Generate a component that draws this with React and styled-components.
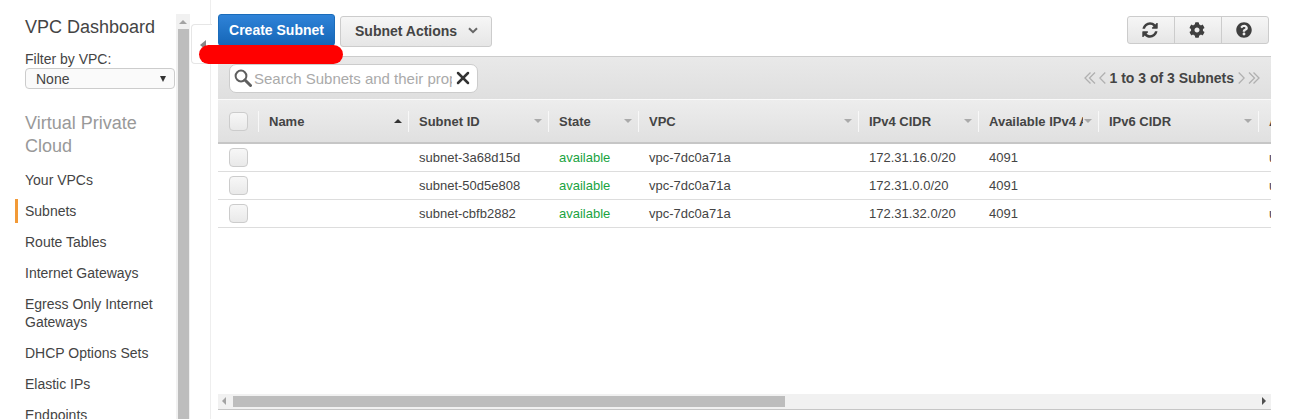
import React from "react";
import styled, { createGlobalStyle } from "styled-components";
import { FaCog, FaQuestionCircle } from "react-icons/fa";
import { X } from "lucide-react";

const Global = createGlobalStyle`
  html, body { margin: 0; padding: 0; background: #fff; overflow: hidden; }
  * { box-sizing: border-box; }
  body { font-family: "Liberation Sans", Arial, sans-serif; color: #444; }
`;

const Page = styled.div`
  display: flex;
  width: 1300px;
  height: 419px;
  overflow: hidden;
  position: relative;
`;

const Sidebar = styled.aside`
  flex: 0 0 176px;
  padding: 17px 0 0 25px;
  height: 419px;
  overflow: hidden;
`;

const SideTitle = styled.div`
  font-size: 18px;
  line-height: 21px;
  color: #444;
`;

const FilterLabel = styled.div`
  font-size: 14px;
  line-height: 16px;
  margin-top: 13px;
  color: #444;
`;

const FilterSelect = styled.div`
  display: flex;
  align-items: center;
  justify-content: space-between;
  width: 150px;
  height: 21px;
  margin-top: 1px;
  padding: 0 8px 0 10px;
  border: 1px solid #ccc;
  border-radius: 4px;
  background: #fafafa;
  font-size: 14px;
  color: #444;
`;

const SelectArrow = styled.span`
  width: 0;
  height: 0;
  border-left: 3.5px solid transparent;
  border-right: 3.5px solid transparent;
  border-top: 6px solid #333;
`;

const SectionTitle = styled.div`
  font-size: 18px;
  line-height: 23px;
  color: #999;
  margin: 23px 0 10px;
`;

const NavItem = styled.div`
  font-size: 14px;
  line-height: 18px;
  color: #444;
  margin: 0 0 7px -10px;
  padding: 3px 0 3px ${(p) => (p.$active ? "7px" : "10px")};
  width: 150px;
  border-left: ${(p) => (p.$active ? "3px solid #f29a37" : "none")};
`;

const VScroll = styled.div`
  flex: 0 0 14px;
  margin-top: 14px;
  height: 405px;
  background: #f1f1f1;
  display: flex;
  flex-direction: column;
  align-items: center;
`;

const VArrow = styled.div`
  flex: 0 0 4px;
  width: 0;
  height: 0;
  margin-top: 6px;
  border-left: 4px solid transparent;
  border-right: 4px solid transparent;
  border-bottom: 4px solid #a3a3a3;
`;

const VThumb = styled.div`
  width: 11px;
  flex: 1;
  margin-top: 5px;
  background: #bdbdbd;
`;

const Gutter = styled.div`
  flex: 0 0 21px;
  height: 419px;
  border-right: 1px solid #eee;
  position: relative;
`;

const CollapseTab = styled.div`
  position: absolute;
  left: 1px;
  top: 24px;
  width: 21px;
  height: 40px;
  background: #fff;
  border: 1px solid #e6e6e6;
  border-right: none;
  border-radius: 4px 0 0 4px;
  display: flex;
  padding: 15px 0 0 8px;
`;

const CollapseArrow = styled.span`
  width: 0;
  height: 0;
  border-top: 5px solid transparent;
  border-bottom: 5px solid transparent;
  border-right: 6px solid #888;
`;

const Main = styled.main`
  flex: 0 0 1053px;
  margin-left: 7px;
  height: 419px;
  display: flex;
  flex-direction: column;
  position: relative;
`;

const Toolbar = styled.div`
  flex: 0 0 56px;
  display: flex;
  align-items: flex-start;
  padding-top: 14px;
`;

const PrimaryButton = styled.button`
  width: 117px;
  height: 32px;
  padding: 0;
  border: 1px solid #1a6cba;
  border-radius: 3px;
  background: linear-gradient(#2f83d8, #1566b7);
  color: #fff;
  font: bold 14px "Liberation Sans", Arial, sans-serif;
`;

const ActionsButton = styled.button`
  display: flex;
  align-items: center;
  gap: 11px;
  width: 152px;
  height: 31px;
  margin: 2px 0 0 5px;
  padding: 0 0 2px 14px;
  border: 1px solid #ccc;
  border-radius: 3px;
  background: linear-gradient(#f6f6f6, #e6e6e6);
  color: #444;
  font: bold 14px "Liberation Sans", Arial, sans-serif;
`;

const IconGroup = styled.div`
  display: flex;
  margin: 2px 2px 0 auto;
  width: 142px;
  height: 28px;
  border: 1px solid #ccc;
  border-radius: 3px;
  background: linear-gradient(#f6f6f6, #e6e6e6);
`;

const IconButton = styled.div`
  flex: 1;
  display: flex;
  align-items: center;
  justify-content: center;
  padding-right: 2px;
  color: #3f3f3f;
  font-size: 16px;
  & + & { border-left: 1px solid #ccc; }
`;

const FilterBar = styled.div`
  flex: 0 0 44px;
  display: flex;
  align-items: center;
  justify-content: space-between;
  padding: 0 11px;
  border-top: 1px solid #ccc;
  border-bottom: 1px solid #fafafa;
  background: linear-gradient(#e9e9e9, #dfdfdf);
`;

const SearchBox = styled.div`
  display: flex;
  align-items: center;
  width: 249px;
  height: 29px;
  padding: 0 4px;
  border: 1px solid #ccc;
  border-radius: 7px;
  background: #fff;

  svg { flex: none; }
`;

const SearchText = styled.span`
  flex: none;
  width: 198px;
  margin: 0 1px 0 2px;
  overflow: hidden;
  white-space: nowrap;
  font-size: 15px;
  color: #aaa;
`;

const Pager = styled.div`
  display: flex;
  align-items: center;
  font-size: 14px;
  font-weight: bold;
  color: #444;
`;

const PagerText = styled.span`
  margin: 0 1px;
`;

const ChevronSvg = styled.svg`
  flex: none;
  margin: ${(p) => (p.$flip ? "0 0 0 3px" : "0 3px 0 0")};
  transform: ${(p) => (p.$flip ? "scaleX(-1)" : "none")};
`;

const HeaderRow = styled.div`
  flex: 0 0 44px;
  display: grid;
  grid-template-columns: ${(p) => p.$cols};
  align-items: center;
  background: linear-gradient(#ededed, #e0e0e0);
  border-bottom: 2px solid #c6c6c6;
  overflow: hidden;
`;

const HeaderCell = styled.div`
  display: flex;
  align-items: center;
  height: 21px;
  padding: 0 6px 0 10px;
  border-left: 1px solid #f8f8f8;
  font-size: 13px;
  font-weight: bold;
  color: #444;
  white-space: nowrap;
  overflow: hidden;
`;

const HeaderLabel = styled.span`
  flex: 1;
  min-width: 0;
  overflow: hidden;
`;

const SortArrow = styled.span`
  flex: none;
  margin-left: 1px;
  width: 0;
  height: 0;
  border-left: 4px solid transparent;
  border-right: 4px solid transparent;
  ${(p) => (p.$up ? "border-bottom: 4px solid #333;" : "border-top: 4px solid #aaa;")}
`;

const CheckCell = styled.div`
  display: flex;
  align-items: center;
  padding-left: 11px;
`;

const Check = styled.span`
  display: block;
  width: 19px;
  height: 19px;
  border: 1px solid #ccc;
  border-radius: 4px;
  background: linear-gradient(#f7f7f7, #e9e9e9);
`;

const Row = styled.div`
  flex: 0 0 28px;
  display: grid;
  grid-template-columns: ${(p) => p.$cols};
  align-items: center;
  border-bottom: 1px solid #ddd;
  overflow: hidden;
`;

const Cell = styled.div`
  padding-left: 11px;
  font-size: 13px;
  color: ${(p) => p.$color || "#444"};
  white-space: nowrap;
  overflow: hidden;
`;

const TableSpace = styled.div`
  flex: 1;
`;

const HScroll = styled.div`
  flex: 0 0 16px;
  margin-bottom: 9px;
  display: flex;
  align-items: center;
  background: #f1f1f1;
  border-bottom: 1px solid #c6c6c6;
  padding: 0 5px 1px 4px;
`;

const HThumb = styled.div`
  width: 552px;
  height: 11px;
  margin-left: 7px;
  background: #bdbdbd;
`;

const HArrow = styled.span`
  width: 0;
  height: 0;
  border-top: 4px solid transparent;
  border-bottom: 4px solid transparent;
  ${(p) =>
    p.$right
      ? "border-left: 4px solid #505050; margin-left: auto;"
      : "border-right: 4px solid #a3a3a3;"}
`;

const RedMark = styled.div`
  position: absolute;
  left: 199px;
  top: 45px;
  width: 144px;
  height: 19px;
  border-radius: 10px;
  background: #f00;
`;

const RefreshIcon = () => (
  <svg width="18" height="18" viewBox="0 0 1792 1792" fill="currentColor">
    <path d="M1639 1056q0 5-1 7-64 268-268 434.5t-478 166.5q-146 0-282.5-55t-243.5-157l-129 129q-19 19-45 19t-45-19-19-45v-448q0-26 19-45t45-19h448q26 0 45 19t19 45-19 45l-137 137q71 66 161 102t187 36q134 0 250-65t186-179q11-17 53-117 8-23 30-23h192q13 0 22.5 9.5t9.5 22.5zm25-800v448q0 26-19 45t-45 19h-448q-26 0-45-19t-19-45 19-45l138-138q-148-137-349-137-134 0-250 65t-186 179q-11 17-53 117-8 23-30 23h-199q-13 0-22.5-9.5t-9.5-22.5v-7q65-268 270-434.5t480-166.5q146 0 284 55.5t245 156.5l130-129q19-19 45-19t45 19 19 45z" />
  </svg>
);

const MagnifierIcon = () => (
  <svg width="18" height="18" viewBox="0 0 18 18" fill="none" stroke="#5f5f5f">
    <circle cx="7" cy="7" r="5.4" strokeWidth="2" />
    <path d="M11 11l5.5 5.5" strokeWidth="3" strokeLinecap="round" />
  </svg>
);

const CaretIcon = () => (
  <svg width="10" height="7" viewBox="0 0 10 7" fill="none" stroke="#666" strokeWidth="2">
    <path d="M1 1.2l4 4 4-4" />
  </svg>
);

const DoubleChevron = ({ flip }) => (
  <ChevronSvg $flip={flip} width="12" height="12" viewBox="0 0 12 12" fill="none" stroke="#b0b0b0" strokeWidth="1.3">
    <path d="M6.5.5 1 6l5.5 5.5M11 .5 5.5 6l5.5 5.5" />
  </ChevronSvg>
);

const SingleChevron = ({ flip }) => (
  <ChevronSvg $flip={flip} width="7" height="12" viewBox="0 0 7 12" fill="none" stroke="#b0b0b0" strokeWidth="1.3">
    <path d="M6.3.5.8 6l5.5 5.5" />
  </ChevronSvg>
);

const cols = "40px 150px 140px 90px 220px 120px 120px 160px 13px";
const headers = ["Name", "Subnet ID", "State", "VPC", "IPv4 CIDR", "Available IPv4 Addresses", "IPv6 CIDR"];
const rows = [
  ["subnet-3a68d15d", "172.31.16.0/20"],
  ["subnet-50d5e808", "172.31.0.0/20"],
  ["subnet-cbfb2882", "172.31.32.0/20"],
];
const nav = ["Your VPCs", "Subnets", "Route Tables", "Internet Gateways", "Egress Only Internet Gateways", "DHCP Options Sets", "Elastic IPs", "Endpoints"];

export default function App() {
  return (
    <Page>
      <Global />
      <Sidebar>
        <SideTitle>VPC Dashboard</SideTitle>
        <FilterLabel>Filter by VPC:</FilterLabel>
        <FilterSelect>None<SelectArrow /></FilterSelect>
        <SectionTitle>Virtual Private Cloud</SectionTitle>
        {nav.map((n) => (
          <NavItem key={n} $active={n === "Subnets"}>{n}</NavItem>
        ))}
      </Sidebar>
      <VScroll><VArrow /><VThumb /></VScroll>
      <Gutter>
        <CollapseTab><CollapseArrow /></CollapseTab>
      </Gutter>
      <Main>
        <Toolbar>
          <PrimaryButton>Create Subnet</PrimaryButton>
          <ActionsButton>Subnet Actions <CaretIcon /></ActionsButton>
          <IconGroup>
            <IconButton><RefreshIcon /></IconButton>
            <IconButton><FaCog /></IconButton>
            <IconButton><FaQuestionCircle /></IconButton>
          </IconGroup>
        </Toolbar>
        <FilterBar>
          <SearchBox>
            <MagnifierIcon />
            <SearchText>Search Subnets and their properties</SearchText>
            <X size={20} color="#333" strokeWidth={3} />
          </SearchBox>
          <Pager>
            <DoubleChevron />
            <SingleChevron />
            <PagerText>1 to 3 of 3 Subnets</PagerText>
            <SingleChevron flip />
            <DoubleChevron flip />
          </Pager>
        </FilterBar>
        <HeaderRow $cols={cols}>
          <CheckCell><Check /></CheckCell>
          {headers.map((h, i) => (
            <HeaderCell key={h}>
              <HeaderLabel>{h}</HeaderLabel>
              <SortArrow $up={i === 0} />
            </HeaderCell>
          ))}
          <HeaderCell>A</HeaderCell>
        </HeaderRow>
        {rows.map(([id, cidr]) => (
          <Row key={id} $cols={cols}>
            <CheckCell><Check /></CheckCell>
            <Cell />
            <Cell>{id}</Cell>
            <Cell $color="#1aa33f">available</Cell>
            <Cell>vpc-7dc0a71a</Cell>
            <Cell>{cidr}</Cell>
            <Cell>4091</Cell>
            <Cell />
            <Cell>u</Cell>
          </Row>
        ))}
        <TableSpace />
        <HScroll>
          <HArrow />
          <HThumb />
          <HArrow $right />
        </HScroll>
      </Main>
      <RedMark />
    </Page>
  );
}
